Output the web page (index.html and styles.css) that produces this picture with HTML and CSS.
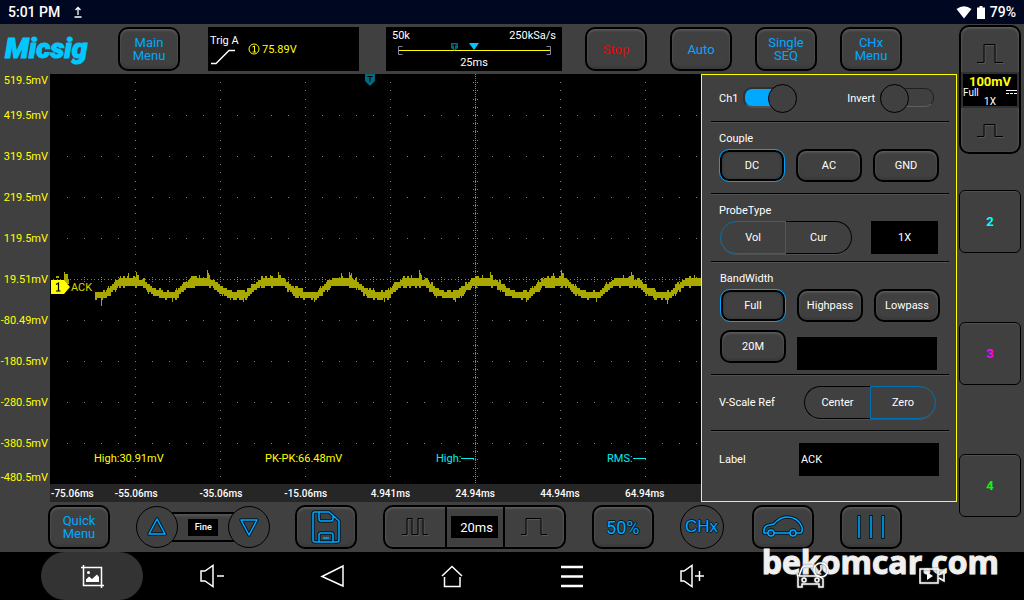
FILE: index.html
```html
<!DOCTYPE html>
<html lang="en">
<head>
<meta charset="utf-8">
<meta name="viewport" content="width=device-width, initial-scale=1">
<title>Micsig Oscilloscope</title>
<link rel="stylesheet" href="styles.css">
</head>
<body>
<header class="status">
  <span>5:01 PM</span>
  <svg class="status-upload" width="10" height="12" viewBox="0 0 10 12"><path d="M5 9V1.500M2.500 4L5 1.500L7.500 4M1.500 11H8.500" fill="none" stroke="#fff" stroke-width="1.300"/></svg>
  <span class="status-right">
    <svg width="16" height="13" viewBox="0 0 16 13"><path d="M0.500 3Q8 -2.500 15.500 3L8 12.500Z" fill="#fff"/></svg>
    <svg width="8" height="13" viewBox="0 0 8 13"><path d="M2.500 0H5.500V1.500H8V13H0V1.500H2.500Z" fill="#fff"/></svg>
    <span>79%</span>
  </span>
</header>

<div class="app">
  <main class="main">
    <div class="topbar">
      <span class="logo">Micsig</span>
      <button class="btn btn-tool">Main<br>Menu</button>
      <div class="trig">
        <div class="trig-name"><span>Trig A</span>
          <svg width="26" height="16" viewBox="0 0 26 16"><path d="M1 14.500H6L19 1.500H25" fill="none" stroke="#fff" stroke-width="1.400"/></svg>
        </div>
        <svg width="12" height="12" viewBox="0 0 12 12"><circle cx="6" cy="6" r="5" fill="none" stroke="#ff0"/><path d="M4.500 4L6.500 3V9M4.500 9H8" fill="none" stroke="#ff0"/></svg>
        <span class="trig-level">75.89V</span>
      </div>
      <div class="timebox">
        <div class="timebox-row"><span>50k</span><span>250kSa/s</span></div>
        <svg width="154" height="14" viewBox="0 0 154 14">
          <path d="M5.500 4.500H1.500V12.500H5.500M149.500 4.500H153.500V12.500H149.500" fill="none" stroke="#8484a0"/>
          <path d="M2 8.500H153" stroke="#ff0"/>
          <path d="M54 1H61V6L57.500 8.500L54 6Z" fill="#006a80"/><path d="M55.500 3H59.500M57.500 3V7" stroke="#000"/>
          <path d="M72 1H82L77 8Z" fill="#00c8ff"/>
        </svg>
        <span>25ms</span>
      </div>
      <button class="btn btn-tool btn-stop">Stop</button>
      <button class="btn btn-tool">Auto</button>
      <button class="btn btn-tool">Single<br>SEQ</button>
      <button class="btn btn-tool">CHx<br>Menu</button>
    </div>

    <div class="scope">
      <div class="yaxis">
        <span>519.5mV</span><span>419.5mV</span><span>319.5mV</span><span>219.5mV</span><span>119.5mV</span><span>19.51mV</span><span>-80.49mV</span><span>-180.5mV</span><span>-280.5mV</span><span>-380.5mV</span><span>-480.5mV</span>
      </div>
      <div class="graph">
        <div class="plot">
          <svg class="plot-svg" viewBox="0 0 651 410" preserveAspectRatio="none" shape-rendering="crispEdges">
            <path id="grid" fill="#808080"/>
            <path id="wave" fill="#a8a800"/>
          </svg>
          <svg class="trig-pin" width="10" height="12" viewBox="0 0 10 12"><path d="M0 0H10V7L5 12L0 7Z" fill="#006a80"/><path d="M2.500 2.500H7.500M5 2V8" stroke="#000"/></svg>
          <div class="channel-tag">
            <svg width="19" height="14" viewBox="0 0 19 14"><path d="M0 0H13L19 7L13 14H0Z" fill="#ff0"/><path d="M5 4.500L7.500 3V11M5 11H9.500" fill="none" stroke="#000" stroke-width="1.200"/></svg>
            <span>ACK</span>
          </div>
          <div class="measures">
            <span>High:30.91mV</span><span>PK-PK:66.48mV</span><span class="cyan">High:<i></i></span><span class="cyan">RMS:<i></i></span>
          </div>
        </div>
        <div class="xaxis">
          <span>-75.06ms</span><span>-55.06ms</span><span>-35.06ms</span><span>-15.06ms</span><span>4.941ms</span><span>24.94ms</span><span>44.94ms</span><span>64.94ms</span>
        </div>
      </div>

      <section class="panel">
        <div class="sec sec-switch">
          <label class="toggle"><span>Ch1</span><input type="checkbox" checked></label>
          <label class="toggle"><span>Invert</span><input type="checkbox"></label>
        </div>
        <div class="sec">
          <h2>Couple</h2>
          <div class="row"><button class="btn opt on">DC</button><button class="btn opt">AC</button><button class="btn opt">GND</button></div>
        </div>
        <div class="sec sec-probe">
          <h2>ProbeType</h2>
          <div class="row row-split">
            <div class="seg"><button class="on">Vol</button><button>Cur</button></div>
            <button class="box box-probe">1X</button>
          </div>
        </div>
        <div class="sec sec-band">
          <h2>BandWidth</h2>
          <div class="row"><button class="btn opt on">Full</button><button class="btn opt">Highpass</button><button class="btn opt">Lowpass</button></div>
          <div class="row row-band"><button class="btn opt">20M</button><input class="box box-wide" type="text" aria-label="Bandwidth value"></div>
        </div>
        <div class="sec sec-line">
          <h2>V-Scale Ref</h2>
          <div class="seg"><button>Center</button><button class="on">Zero</button></div>
        </div>
        <div class="sec sec-line sec-label">
          <label for="label">Label</label>
          <input class="box box-wide" id="label" type="text" value="ACK">
        </div>
      </section>
    </div>

    <div class="bottombar">
      <button class="btn btn-tool">Quick<br>Menu</button>
      <div class="fine">
        <button class="round" aria-label="Up"><svg width="20" height="20" viewBox="0 0 20 20"><path d="M10 2L18 17H2Z" class="dark"/><path d="M10 2L18 17H2Z" class="blue"/></svg></button>
        <div class="fine-bar"><span>Fine</span></div>
        <button class="round" aria-label="Down"><svg width="20" height="20" viewBox="0 0 20 20"><path d="M10 18L18 3H2Z" class="dark"/><path d="M10 18L18 3H2Z" class="blue"/></svg></button>
      </div>
      <button class="btn btn-tool" aria-label="Save">
        <svg width="30" height="34" viewBox="0 0 30 34">
          <g class="dark"><path d="M3 2H18L28 11V30Q28 32 26 32H4Q2 32 2 30V4Q2 2 4 2M8 2V9Q8 11 10 11H20Q22 11 22 8V5M8 32V25Q8 23 10 23H20Q22 23 22 25V32"/></g>
          <g class="blue"><path d="M3 2H18L28 11V30Q28 32 26 32H4Q2 32 2 30V4Q2 2 4 2M8 2V9Q8 11 10 11H20Q22 11 22 8V5M8 32V25Q8 23 10 23H20Q22 23 22 25V32"/><path d="M12 28H18"/></g>
        </svg>
      </button>
      <div class="timebase">
        <button aria-label="Slower"><svg width="28" height="20" viewBox="0 0 28 20"><path class="pulse-hi" d="M1 18.500H7V2.500H12V18.500H18V2.500H23V18.500H28"/><path class="pulse" d="M1 17.500H6V1.500H11V17.500H17V1.500H22V17.500H27"/></svg></button>
        <div class="timebase-value"><span>20ms</span></div>
        <button aria-label="Faster"><svg width="28" height="20" viewBox="0 0 28 20"><path class="pulse-hi" d="M2 18.500H7V2.500H22V18.500H28"/><path class="pulse" d="M1 17.500H6V1.500H21V17.500H27"/></svg></button>
      </div>
      <button class="btn btn-tool btn-half">50%</button>
      <button class="round round-ch">CHx</button>
      <button class="btn btn-tool btn-car" aria-label="Automotive">
        <svg width="42" height="24" viewBox="0 0 42 24">
          <g class="dark"><path d="M6 18H2Q1 11 7 10L12 9Q18 2 25 2Q36 2 40 12Q41 18 38 18H34M28 18H12"/><circle cx="9" cy="18" r="3"/><circle cx="31" cy="18" r="3"/></g>
          <g class="blue"><path d="M6 18H2Q1 11 7 10L12 9Q18 2 25 2Q36 2 40 12Q41 18 38 18H34M28 18H12"/><circle cx="9" cy="18" r="3"/><circle cx="31" cy="18" r="3"/></g>
        </svg>
      </button>
      <button class="btn btn-tool" aria-label="Measure">
        <svg width="30" height="26" viewBox="0 0 30 26"><path class="dark" d="M3 1V25M15 1V25M27 1V25"/><path class="blue" d="M3 2V24M15 2V24M27 2V24"/></svg>
      </button>
    </div>
  </main>

  <aside class="channels">
    <div class="slot">
      <div class="ch1">
        <button aria-label="Scale up"><svg width="28" height="22" viewBox="0 0 28 22"><path class="pulse-hi" d="M2 20.500H9V2.500H20V20.500H28"/><path class="pulse" d="M1 19.500H8V1.500H19V19.500H27"/></svg></button>
        <div class="ch1-info">
          <b>100mV</b>
          <div class="ch1-line"><span>Full</span><svg width="11" height="6" viewBox="0 0 11 6"><path d="M0 1.500H11" stroke="#fff"/><path d="M0 4.500H11" stroke="#fff" stroke-dasharray="3 1"/></svg></div>
          <span class="ch1-probe">1X</span>
        </div>
        <button aria-label="Scale down"><svg width="28" height="16" viewBox="0 0 28 16"><path class="pulse-hi" d="M2 14.500H9V2.500H20V14.500H28"/><path class="pulse" d="M1 13.500H8V1.500H19V13.500H27"/></svg></button>
      </div>
    </div>
    <div class="slot"><button class="ch c2">2</button></div>
    <div class="slot"><button class="ch c3">3</button></div>
    <div class="slot"><button class="ch c4">4</button></div>
  </aside>
</div>

<nav class="nav">
  <span class="watermark">bekomcar.com</span>
  <button class="nav-on" aria-label="Screenshot"><svg width="24" height="24" viewBox="0 0 24 24"><g fill="none" stroke="#fff" stroke-width="1.500"><path d="M1 3.500H21.500V24M3.500 1V21.500H24"/></g><circle cx="8.500" cy="8.500" r="1.500" fill="#fff"/><path d="M6 18V15.500L9 12.500L12 15L17 10.500L19 13V18Z" fill="#fff"/></svg></button>
  <button aria-label="Volume down"><svg width="26" height="24" viewBox="0 0 26 24"><path d="M2 7H6L14 1.500V22.500L6 17H2Z" class="line"/><path d="M18 12H25" class="line"/></svg></button>
  <button aria-label="Back"><svg width="24" height="24" viewBox="0 0 24 24"><path d="M23 2V22L2 12.500Z" class="line"/></svg></button>
  <button aria-label="Home"><svg width="24" height="24" viewBox="0 0 24 24"><path d="M2 12L12 2.500L22 12M4.500 13V22.500H20V13" class="line"/></svg></button>
  <button aria-label="Menu"><svg width="24" height="24" viewBox="0 0 24 24"><path d="M1 3H23M1 12.500H23M1 22H23" class="line line-bold"/></svg></button>
  <button aria-label="Volume up"><svg width="26" height="24" viewBox="0 0 26 24"><path d="M2 7H5L13 1.500V22.500L5 17H2Z" class="line"/><path d="M16 12H25M20.500 7V17" class="line"/></svg></button>
  <button aria-label="Vehicle"><svg width="34" height="30" viewBox="0 0 34 30"><g id="car" class="line line-halo"><path d="M4 15L7 7Q8 5 10 5H18M4 15H24L28 18V26H24V23H7V26H3V16L2 13"/><circle cx="9" cy="19" r="2"/><circle cx="22" cy="19" r="2"/><circle cx="26" cy="9" r="7"/><path d="M26 4V9L23 12"/></g></svg></button>
  <button aria-label="Record"><svg width="26" height="18" viewBox="0 0 26 18"><path d="M1 2H19V16H1ZM20 8L25 4V14L20 11" class="line line-halo"/><path d="M8 5L14 9L8 13Z" fill="#fff"/></svg></button>
</nav>
<script src="scope.js"></script>
</body>
</html>
```
FILE: styles.css
```css
* { box-sizing: border-box; }

body {
  margin: 0;
  min-height: 100vh;
  display: flex;
  flex-direction: column;
  background: #000;
  color: #fff;
  font: 11px/13px Roboto, "Liberation Sans", sans-serif;
}

button, input { font: inherit; color: inherit; margin: 0; padding: 0; }
button { border: 0; background: none; cursor: pointer; }
svg { display: block; flex: none; }

/* status bar */
.status {
  display: flex;
  align-items: center;
  height: 24px;
  padding: 0 8px;
  background: #000821;
  font-size: 14px;
  font-weight: 500;
}
.status-upload { margin-left: 13px; }
.status-right { margin-left: auto; display: flex; align-items: center; gap: 5px; }

/* frame */
.app { flex: 1; display: grid; grid-template-columns: 1fr 67px; background: #404040; }
.main { display: flex; flex-direction: column; min-width: 0; }

.btn {
  border: 2px solid #000;
  border-radius: 10px;
  background: #404040;
  box-shadow: inset 0 1px 3px rgba(150, 150, 150, 0.5), inset 0 -1px 3px rgba(0, 0, 0, 0.3);
  display: flex;
  align-items: center;
  justify-content: center;
}
.btn-tool { width: 62px; height: 44px; color: #00a8ff; font-size: 13px; line-height: 13px; flex: none; }
.btn-stop { color: #f00000; }

/* top bar */
.topbar {
  height: 50px;
  display: flex;
  align-items: center;
  padding: 0 55px 0 5px;
  gap: 23px;
}
.logo {
  width: 86px;
  margin-right: 5px;
  color: #00c8ff;
  font-size: 28px;
  line-height: 30px;
  font-weight: 900;
  font-style: italic;
  -webkit-text-stroke: 1px #00c8ff;
}
.trig {
  flex: none;
  width: 151px;
  height: 44px;
  margin: 0 4px 0 5px;
  padding-left: 2px;
  background: #000;
  display: flex;
  align-items: center;
}
.trig-name { width: 38px; white-space: nowrap; display: flex; flex-direction: column; gap: 2px; }
.trig-level { color: #ff0; margin-left: 2px; }
.timebox {
  flex: none;
  width: 176px;
  height: 44px;
  padding: 2px 6px;
  background: #000;
  display: flex;
  flex-direction: column;
  align-items: center;
}
.timebox-row { align-self: stretch; display: flex; justify-content: space-between; }

/* scope */
.scope { flex: 1; display: grid; grid-template-columns: 50px 1fr 256px; }
.yaxis {
  display: grid;
  grid-template-rows: 1fr repeat(9, 2fr) 1fr;
  padding-bottom: 18px;
  color: #ff0;
  text-align: right;
  padding-right: 2px;
  align-items: center;
  white-space: nowrap;
  justify-items: end;
}
.yaxis span:first-child { align-self: start; }
.yaxis span:last-child { align-self: end; }
.graph { display: flex; flex-direction: column; min-width: 0; }
.plot { flex: 1; position: relative; background: #000; }
.plot-svg { position: absolute; inset: 0; width: 100%; height: 100%; }
.trig-pin { position: absolute; left: 49%; margin-left: -4px; top: 0; }
.channel-tag {
  position: absolute;
  left: 1px;
  top: 50%;
  display: flex;
  align-items: center;
  gap: 1px;
  padding-top: 1px;
  color: #d8d800;
}
.measures {
  position: absolute;
  left: 44px;
  right: 0;
  bottom: 19px;
  display: grid;
  grid-template-columns: repeat(3, 171fr) 94fr;
  color: #ff0;
  white-space: nowrap;
}
.cyan { color: #00f0f0; display: flex; align-items: center; }
.cyan i { width: 13px; height: 1px; background: #00f0f0; }
.xaxis {
  height: 18px;
  display: grid;
  grid-template-columns: 42fr repeat(7, 85fr) 14fr;
  align-items: center;
  background: #262626;
  font-size: 10px;
  font-weight: 500;
  text-align: center;
  white-space: nowrap;
}
.xaxis span:first-child { padding-left: 1px; text-align: left; }

/* channel panel */
.panel {
  border: 1px solid #ff0;
  padding: 0 7px 0 9px;
  display: flex;
  flex-direction: column;
}
.panel h2 { margin: 0; font: inherit; }
.sec { padding: 10px 9px 11px 8px; border-bottom: 1px solid #000; box-shadow: 0 1px #505050; }
.sec h2 + .row { margin-top: 4px; }
.sec-probe { padding: 10px 11px 7px 9px; }
.sec-probe h2 { margin-left: -1px; }
.sec-band { padding: 10px 9px 4px; }
.row { display: flex; gap: 11px; }
.row-split { justify-content: space-between; }
.row-band { margin-top: 8px; align-items: start; }
.row-band .box { margin-top: 7px; }
.sec-line { display: flex; align-items: center; justify-content: space-between; padding: 11px 13px 11px 8px; }
.sec-line.sec-label { padding: 12px 10px 12px 8px; border: 0; box-shadow: none; }
.opt { width: 66px; height: 33px; }
.opt.on { border: 1px solid #00a0ff; box-shadow: inset 0 0 0 2px #000, inset 0 0 2px 3px #383838; }
.box { background: #000; border: 0; border-radius: 0; height: 33px; }
.box-probe { width: 67px; }
.box-wide { width: 140px; padding: 0 2px; }
.seg { display: flex; }
.seg button { width: 66px; height: 33px; border: 1px solid #000; box-shadow: 0 1px #505050; }
.seg button:first-child { border-radius: 17px 0 0 17px; border-right: 0; }
.seg button:last-child { border-radius: 0 17px 17px 0; border-left: 0; }
.seg button.on { border: 1px solid #0070b0; }

.sec-switch { display: flex; justify-content: space-between; align-items: center; padding: 9px 15px 10px 8px; }
.toggle { display: flex; align-items: center; gap: 5px; }
.toggle span { padding-top: 2px; }
.toggle input {
  appearance: none;
  width: 54px;
  height: 27px;
  display: flex;
  align-items: center;
  position: relative;
}
.toggle input::before {
  content: "";
  width: 54px;
  height: 17px;
  border: 1px solid #202020;
  border-bottom-color: #606060;
  border-radius: 9px;
  background: #404040;
}
.toggle input::after {
  content: "";
  position: absolute;
  left: 0;
  top: 0;
  width: 27px;
  height: 27px;
  border: 1px solid #000;
  border-radius: 50%;
  background: #404040;
}
.toggle input:checked::before { background: #00a8ff; border: 2px solid #303030; border-bottom-color: #505050; }
.toggle input:checked::after { left: auto; right: 0; }

/* bottom bar */
.bottombar {
  height: 50px;
  display: flex;
  align-items: center;
  justify-content: space-between;
  padding: 0 55px 0 48px;
}
.dark, .blue { fill: none; stroke-linejoin: round; }
.dark { stroke: #001828; stroke-width: 3.500; }
.blue { stroke: #00a8ff; stroke-width: 1.500; }
.pulse, .pulse-hi { fill: none; stroke: #000; }
.pulse-hi { stroke: #585858; }
.fine { display: flex; align-items: center; }
.round {
  position: relative;
  width: 42px;
  height: 42px;
  border: 1px solid #000;
  border-radius: 50%;
  background: #404040;
  display: flex;
  align-items: center;
  justify-content: center;
}
.fine-bar {
  width: 62px;
  height: 30px;
  margin: 0 -6px;
  border: solid #000;
  border-width: 2px 0;
  box-shadow: inset 0 2px 3px #555;
  display: flex;
  align-items: center;
  justify-content: center;
  font-size: 9px;
  font-weight: 500;
}
.fine-bar span { background: #000; padding: 2px 6px 2px 7px; }
.timebase {
  width: 183px;
  height: 44px;
  border: 2px solid #000;
  border-radius: 10px;
  display: grid;
  grid-template-columns: 1fr 60px 1fr;
  box-shadow: inset 0 1px 3px rgba(150, 150, 150, 0.5);
}
.timebase > * { display: flex; align-items: center; justify-content: center; }
.timebase-value { border: solid #000; border-width: 0 2px; font-size: 13px; }
.timebase-value span { background: #000; padding: 5px 5px 4px 9px; }
.btn-half, .round-ch { color: #00a8ff; text-shadow: 1px 0 #001828, -1px 0 #001828, 0 1px #001828, 0 -1px #001828; }
.btn-half { font-size: 18px; }
.round-ch { width: 44px; height: 44px; font: 17px/20px "Liberation Sans", sans-serif; }
.btn-car { margin-left: 3px; }

/* channel column */
.channels { display: grid; grid-template-rows: repeat(4, 1fr); }
.slot { padding: 0 3px 1px 2px; display: flex; flex-direction: column; justify-content: center; }
.ch {
  height: 63px;
  border: 1px solid #000;
  border-radius: 6px;
  box-shadow: inset 0 1px #505050;
  font-size: 13px;
  font-weight: 700;
}
.c2 { color: #00ffff; }
.c3 { color: #ff00ff; }
.c4 { color: #00ff00; }
.ch1 {
  height: 129px;
  border: 2px solid #000;
  border-radius: 10px;
  display: grid;
  grid-template-rows: 1fr 36px 1fr;
  box-shadow: inset 0 1px 3px rgba(150, 150, 150, 0.5);
}
.ch1 button { display: flex; align-items: center; justify-content: center; padding-top: 10px; }
.ch1 button:last-child { padding: 2px 0 0; }
.ch1-info {
  border: solid #303030;
  border-width: 2px;
  background: #000;
  font-size: 10px;
  line-height: 10px;
  text-align: center;
}
.ch1-info b { display: block; font-size: 13px; line-height: 15px; color: #ff0; }
.ch1-line { display: flex; justify-content: space-between; line-height: 8px; }
.ch1-probe { display: block; }

/* navigation bar */
.nav {
  height: 48px;
  position: relative;
  display: grid;
  grid-template-columns: repeat(8, 1fr);
  justify-items: center;
  padding: 0 32px;
  background: #000;
}
.nav button { position: relative; width: 102px; height: 48px; display: flex; align-items: center; justify-content: center; }
.nav-on { background: #333; border-radius: 24px; }
.line { fill: none; stroke: #fff; stroke-width: 1.500; }
.line-bold { stroke-width: 2.500; }
.line-halo { filter: drop-shadow(0 0 1px #666); }
.watermark {
  position: absolute;
  right: 25px;
  top: -13px;
  color: #f0f0f0;
  font: 700 32px/46px "Open Sans", "Noto Sans", sans-serif;
  -webkit-text-stroke: 1px #f0f0f0;
  text-shadow: 0 0 2px #555;
}
```
FILE: scope.js
```js
const dot = (x, y, w = 1, h = 1) => `M${x} ${y}h${w}v${h}h${-w}z`;

function drawGrid() {
  let d = "";
  for (let x = 85; x < 651; x += 85) {
    for (let i = 1; i < 50; i++) d += dot(x, Math.round(i * 8.2));
  }
  for (let y = 41; y < 410; y += 41) {
    for (let x = 17; x < 651; x += 17) d += dot(x, y);
  }
  for (let i = 1; i < 191; i++) d += dot(Math.round(i * 3.4), 205);
  for (let x = 17; x < 651; x += 17) d += dot(x, 203) + dot(x, 207);
  for (let y = 0; y < 410; y += 2) d += dot(425, y);
  for (let i = 1; i < 50; i++) {
    const y = Math.round(i * 8.2);
    d += dot(423, y) + dot(427, y);
  }
  document.getElementById("grid").setAttribute("d", d);
}

function drawWave() {
  let seed = 7;
  const rnd = () => (seed = (seed * 16807) % 2147483647) / 2147483647;
  // phase in pixels -> trace centre
  const shape = [[0, 221], [4, 220], [10, 214], [18, 208], [34, 207], [42, 209], [52, 217], [60, 220], [71, 221]];
  const level = (p) => {
    for (let i = 1; i < shape.length; i++) {
      const [x0, y0] = shape[i - 1], [x1, y1] = shape[i];
      if (p <= x1) return y0 + (y1 - y0) * (p - x0) / (x1 - x0);
    }
    return 221;
  };
  let d = dot(6, 202, 3, 2) + dot(14, 198, 1, 11) + dot(15, 200, 3, 10) + dot(18, 205, 1, 5);
  let up = 0, down = 0;
  for (let x = 45; x < 651; x++) {
    const p = (x - 51 + 141.4) % 70.7;
    if (x % 2) {
      up = rnd() > 0.75 ? 2 : 0;
      down = rnd() > 0.65 ? 2 : 0;
    }
    let top = Math.round((level(p) - 3) / 2) * 2 - up;
    let bottom = Math.round((level(p) + 4) / 2) * 2 + down;
    if (p < 1) bottom += 4;
    if (p >= 35 && p < 36) top -= 6;
    if (p >= 36 && p < 38) top -= 3;
    if (p >= 27 && p < 28) top -= 3;
    d += dot(x, top, 1, bottom - top);
  }
  document.getElementById("wave").setAttribute("d", d);
}

drawGrid();
drawWave();
```
